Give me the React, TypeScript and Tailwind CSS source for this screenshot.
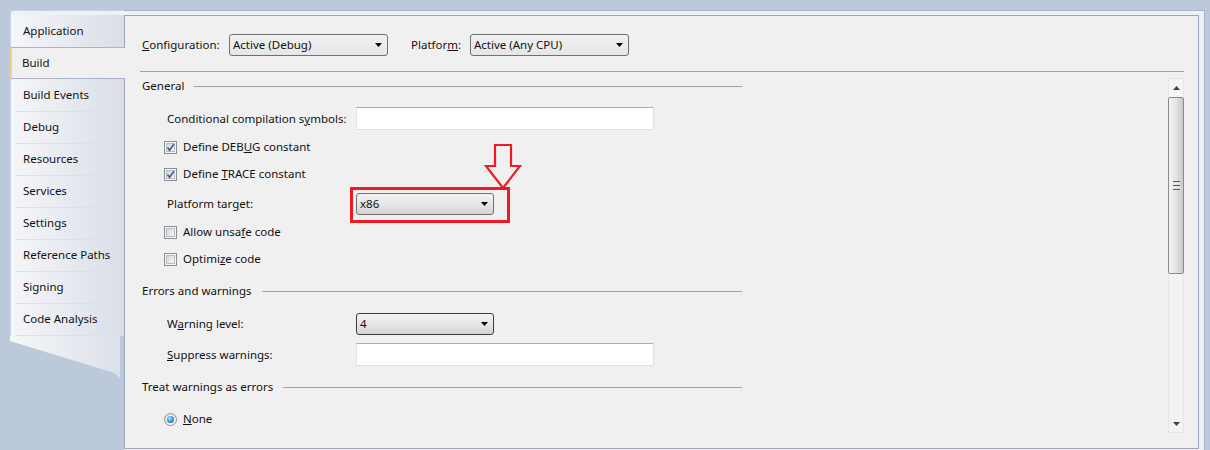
import React from "react";

const FONT = { fontFamily: '"Noto Sans", "Segoe UI", Arial, sans-serif' };

function Arrow() {
  return (
    <svg width="7" height="4" viewBox="0 0 7 4" className="shrink-0">
      <path d="M0 0 H7 L3.5 4 Z" fill="#000" />
    </svg>
  );
}

function Select({ value, className }: { value: string; className: string }) {
  return (
    <div className={"h-[22px] flex items-center justify-between pl-[3px] pr-[5px] rounded-[3px] " + className}>
      <span className="leading-none">{value}</span>
      <Arrow />
    </div>
  );
}

function Input({ className }: { className: string }) {
  return <div className={"h-[23px] bg-white border border-[#dfe3e9] border-t-[#abadb3] " + className} />;
}

function Check({ checked }: { checked: boolean }) {
  return (
    <div className="w-[13px] h-[13px] border border-[#8e8f8f] bg-[#f4f4f4] p-[1px] flex shrink-0">
      <div className="flex-1 border border-[#b7bcc3] bg-gradient-to-br from-[#d3d6db] to-[#f8f8f8] relative">
        {checked && (
          <svg width="11" height="11" viewBox="0 0 11 11" className="absolute left-[-2px] top-[-2px]">
            <path d="M2.5 5.5 L4.6 8.3 L8.8 2.2" stroke="#4b5f93" strokeWidth="1.7" fill="none" />
          </svg>
        )}
      </div>
    </div>
  );
}

function Radio() {
  return (
    <div className="w-[13px] h-[13px] rounded-full border border-[#8e8f8f] bg-gradient-to-br from-[#dcdfe3] to-[#f8f8f8] flex items-center justify-center shrink-0">
      <div className="w-[7px] h-[7px] rounded-full bg-[radial-gradient(circle_at_40%_35%,#b9ecff_0%,#3aa0dc_45%,#1c4f8a_100%)]" />
    </div>
  );
}

function Section({ title, className }: { title: string; className: string }) {
  return (
    <div className={"h-[20px] w-[600px] flex items-center " + className}>
      <span>{title}</span>
      <div className="flex-1 h-px bg-[#a0a0a0] ml-[10px]" />
    </div>
  );
}

function Label({ children }: { children: React.ReactNode }) {
  return <div className="w-[214px] pl-[25px] shrink-0">{children}</div>;
}

function CheckRow({ checked, children, className }: { checked: boolean; children: React.ReactNode; className: string }) {
  return (
    <div className={"h-[20px] flex items-center pl-[22px] gap-[6px] " + className}>
      <Check checked={checked} />
      <span>{children}</span>
    </div>
  );
}

const tabs = [
  "Application",
  "Build",
  "Build Events",
  "Debug",
  "Resources",
  "Services",
  "Settings",
  "Reference Paths",
  "Signing",
  "Code Analysis",
];

function Tabs() {
  return (
    <div className="w-[114px] flex flex-col shrink-0">
      <div className="h-[5px] bg-[#eef1f5] border-t border-l border-[#c9d2de] rounded-tl-[3px]" />
      <div className="flex flex-col bg-gradient-to-r from-[#f5f6f9] to-[#d9dee7] border-l border-[#c9d2de]">
        {tabs.map((t, i) => {
          const sel = i === 1;
          if (sel) {
            return (
              <div
                key={t}
                className="h-[32px] mr-[-1px] ml-[-1px] relative z-10 bg-[#f0f0f0] border-t border-b border-[#a9b5c6] flex items-center pl-[12px] pb-[1px] rounded-l-[2px]"
              >
                <div className="absolute left-0 top-0 bottom-0 w-[2px] bg-[#f5cf84]" />
                {t}
              </div>
            );
          }
          const showSep = i !== 0 && i !== 2;
          return (
            <div key={t} className="h-[32px] flex flex-col">
              {showSep ? <div className="h-px mx-[4px] bg-[#dde0e6]" /> : <div className="h-px" />}
              <div className="flex-1 flex items-center pl-[12px] pb-[2px]">{t}</div>
            </div>
          );
        })}
        <div className="h-px mx-[4px] bg-[#dde0e6]" />
      </div>
      <div className="h-[42px] w-[110px] bg-gradient-to-r from-[#f5f6f9] to-[#dce1e9] [clip-path:polygon(0_0,100%_0,100%_100%,95%_88%,0_5px)]" />
    </div>
  );
}

function Scrollbar() {
  return (
    <div className="w-[16px] h-[355px] mt-[6px] flex flex-col shrink-0">
      <div className="h-[19px] bg-[#f5f5f5] border-x border-t border-[#e6e6e6] flex items-center justify-center">
        <svg width="7" height="4" viewBox="0 0 7 4">
          <path d="M3.5 0 L7 4 H0 Z" fill="#404040" />
        </svg>
      </div>
      <div className="h-[177px] border border-[#8b8b8b] rounded-[2px] bg-gradient-to-r from-[#f4f4f4] via-[#e4e4e4] to-[#c9c9c9] flex items-center justify-center">
        <div className="flex flex-col gap-[1px] w-[7px]">
          <div className="h-px bg-[#5a5a5a]" />
          <div className="h-px bg-[#e8e8e8]" />
          <div className="h-px bg-[#5a5a5a]" />
          <div className="h-px bg-[#e8e8e8]" />
          <div className="h-px bg-[#5a5a5a]" />
        </div>
      </div>
      <div className="flex-1 bg-[#f2f2f2] border-x border-b border-[#e6e6e6] flex items-end justify-center pb-[6px]">
        <svg width="7" height="4" viewBox="0 0 7 4">
          <path d="M0 0 H7 L3.5 4 Z" fill="#404040" />
        </svg>
      </div>
    </div>
  );
}

export default function App() {
  return (
    <div
      className="relative w-[1210px] h-[450px] overflow-hidden bg-[#bcc9da] flex pt-[10px] pl-[10px] text-[11.5px] text-[#111111]"
      style={FONT}
    >
      <Tabs />
      <div className="w-[1081px] h-[440px] border-t border-r border-[#a9b5c7] bg-[#eef1f5] pt-[4px] pr-[5px] shrink-0">
        <div className="w-[1075px] h-[434px] border border-[#9ca8b8] bg-[#f0f0f0] flex flex-col">
          {/* header */}
          <div className="flex items-center pt-[18px] pl-[17px] h-[40px]">
            <div className="w-[87px]">
              <u>C</u>onfiguration:
            </div>
            <Select value="Active (Debug)" className="w-[159px] border border-[#707070] bg-gradient-to-b from-[#f2f2f2] to-[#e6e6e6]" />
            <div className="w-[59px] ml-[23px]">
              Platfor<u>m</u>:
            </div>
            <Select value="Active (Any CPU)" className="w-[159px] border border-[#707070] bg-gradient-to-b from-[#f2f2f2] to-[#e6e6e6]" />
          </div>
          <div className="h-px bg-[#a0a0a0] ml-[15px] w-[1044px] mt-[15px]" />
          {/* body */}
          <div className="flex flex-1">
            <div className="w-[1043px] flex flex-col pl-[17px] pt-[4px]">
              <Section title="General" className="" />
              <div className="h-[23px] mt-[11px] flex items-center">
                <Label>
                  Conditional compilation s<u>y</u>mbols:
                </Label>
                <Input className="w-[298px]" />
              </div>
              <CheckRow checked className="mt-[7px]">
                Define DEB<u>U</u>G constant
              </CheckRow>
              <CheckRow checked className="mt-[7px]">
                Define <u>T</u>RACE constant
              </CheckRow>
              <div className="h-[22px] mt-[9px] flex items-center">
                <Label>
                  Platform tar<u>g</u>et:
                </Label>
                <Select value="x86" className="w-[138px] border border-[#707070] bg-gradient-to-b from-[#f3f3f3] via-[#e6e6e6] to-[#d3d3d3]" />
              </div>
              <CheckRow checked={false} className="mt-[7px]">
                Allow unsa<u>f</u>e code
              </CheckRow>
              <CheckRow checked={false} className="mt-[7px]">
                Optimi<u>z</u>e code
              </CheckRow>
              <Section title="Errors and warnings" className="mt-[12px]" />
              <div className="h-[22px] mt-[12px] flex items-center">
                <Label>
                  W<u>a</u>rning level:
                </Label>
                <Select value="4" className="w-[138px] border border-[#3d3d3d] bg-gradient-to-b from-[#f3f3f3] via-[#e6e6e6] to-[#d3d3d3]" />
              </div>
              <div className="h-[23px] mt-[8px] flex items-center">
                <Label>
                  <u>S</u>uppress warnings:
                </Label>
                <Input className="w-[298px]" />
              </div>
              <Section title="Treat warnings as errors" className="mt-[11px]" />
              <div className="h-[20px] mt-[12px] flex items-center pl-[22px] gap-[6px]">
                <Radio />
                <span>
                  <u>N</u>one
                </span>
              </div>
            </div>
            <Scrollbar />
          </div>
        </div>
      </div>

      {/* annotation overlay */}
      <div className="absolute left-[350px] top-[187px] w-[160px] h-[36px] border-[3px] border-[#ed1c24] pointer-events-none" />
      <svg className="absolute left-0 top-0 pointer-events-none" width="1210" height="450">
        <polygon
          points="495,145 511,145 511,166 520,166 503,188 486,166 495,166"
          fill="none"
          stroke="#ed1c24"
          strokeWidth="2.2"
        />
      </svg>
    </div>
  );
}
